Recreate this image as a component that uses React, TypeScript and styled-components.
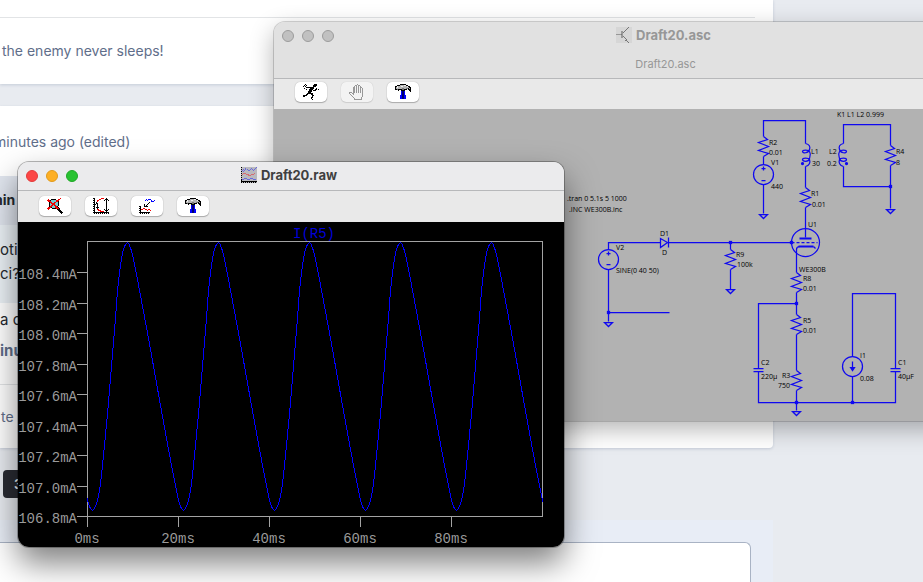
import React from "react";
import styled, { createGlobalStyle } from "styled-components";

const GlobalStyle = createGlobalStyle`
  * { box-sizing: border-box; }
  body {
    margin: 0;
    background: #e8ebf0;
    font-family: Inter, "Liberation Sans", sans-serif;
    overflow: hidden;
  }
`;

/* ---------- forum page ---------- */

const Desktop = styled.div`
  position: relative;
  display: flex;
  flex-direction: column;
  height: 100vh;
  overflow: hidden;
`;

const Thread = styled.main`
  display: flex;
  flex: 1;
  flex-direction: column;
  margin-right: 150px;
  font-size: 14px;
  line-height: 24px;
  color: #24292f;
`;

const Post = styled.article<{ $last?: boolean }>`
  background: #fff;
  border-radius: ${(p) => (p.$last ? "0 0 4px 0" : "0")};
  box-shadow: 0 1px 3px rgba(60, 80, 120, 0.2);
  margin-bottom: 22px;
  padding-top: ${(p) => (p.$last ? "0" : "17px")};
  overflow: hidden;
`;

const PostRule = styled.hr`
  border: 0;
  border-top: 1px solid #e2e4e6;
  margin: 0 18px 0 0;
`;

const Signature = styled.p`
  margin: 0;
  padding: 21px 2px;
  color: #5f6e8a;
`;

const PostMeta = styled.header`
  padding: 24px 0 22px;
  margin-left: -6px;
  color: #5f6e8a;
`;

const QuoteHead = styled.div`
  padding: 12px 0 13px;
  margin-left: -10px;
  background: #e0e5ee;
  font-weight: 700;
`;

const QuoteBody = styled.blockquote`
  margin: 0;
  padding: 13px 0 17px;
  background: #ebf1f6;
  font-size: 15px;
`;

const Reply = styled.div`
  padding: 5px 0 21px;
  font-size: 15px;
`;

const Edited = styled.div`
  margin-top: 7px;
  color: #5f6e8a;
  font-weight: 700;
`;

const PostFooter = styled.footer`
  padding: 20px 1px 19px;
  color: #5f6e8a;
`;

const Pager = styled.nav`
  padding: 0 3px 22px;
`;

const PageButton = styled.button`
  display: block;
  width: 36px;
  height: 28px;
  padding: 0 11px;
  border: 0;
  border-radius: 4px;
  background: #2a2c33;
  color: #fff;
  font: 600 13px Inter, sans-serif;
  text-align: left;
`;

const ReplyForm = styled.form`
  display: flex;
  flex: 1;
  padding: 22px 22px 0 0;
  background: #e8edf6;
`;

const ReplyBox = styled.textarea`
  flex: 1;
  border: 1px solid #a9b3c4;
  border-width: 1px 1px 0 0;
  border-radius: 0 6px 0 0;
  background: #fff;
  resize: none;
`;

/* ---------- application windows ---------- */

const AppWindow = styled.section<{ $active?: boolean }>`
  position: absolute;
  top: ${(p) => (p.$active ? "162px" : "22px")};
  left: ${(p) => (p.$active ? "18px" : "274px")};
  right: ${(p) => (p.$active ? "359px" : "-134px")};
  border-radius: ${(p) => (p.$active ? "11px" : "11px 11px 0 0")};
  overflow: hidden;
  background: #e9e9e9;
  box-shadow: ${(p) =>
    p.$active
      ? "0 0 0 1px rgba(0,0,0,.28), 0 16px 32px rgba(0,0,0,.5)"
      : "0 0 0 1px rgba(0,0,0,.16), 0 8px 24px rgba(0,0,0,.3)"};
`;

const TitleBar = styled.header<{ $active?: boolean }>`
  display: grid;
  grid-template-columns: 60px 1fr 64px;
  align-items: center;
  padding: 0 8px;
  height: 28px;
  background: ${(p) => (p.$active ? "#ebebed" : "#e1e1e1")};
  color: ${(p) => (p.$active ? "#3f3f3f" : "#979797")};
`;

const Lights = styled.div`
  display: flex;
  gap: 8px;
`;

const Light = styled.button<{ $fill: string; $edge: string }>`
  width: 12px;
  height: 12px;
  padding: 0;
  border: 1px solid ${(p) => p.$edge};
  border-radius: 50%;
  background: ${(p) => p.$fill};
`;

const WindowTitle = styled.h1`
  display: flex;
  align-items: center;
  justify-content: center;
  gap: 4px;
  margin: 0;
  padding-bottom: 2px;
  font-size: 13px;
  line-height: 16px;
  font-weight: 700;
`;

const DocumentTab = styled.div`
  height: 28px;
  background: #e1e1e1;
  color: #979797;
  font-size: 11px;
  line-height: 28px;
  text-align: center;
`;

const Toolbar = styled.div<{ $active?: boolean }>`
  display: flex;
  gap: 14px;
  padding: ${(p) => (p.$active ? "5px 21px 6px" : "3px 21px 7px")};
  border-top: 1px solid #b7b8ba;
  background: #e9e9e9;
`;

const ToolButton = styled.button`
  display: flex;
  align-items: center;
  justify-content: center;
  width: 32px;
  height: 20px;
  padding: 0;
  border: 0;
  border-radius: 5px;
  background: #fff;
  box-shadow: 0 0 1px rgba(0, 0, 0, 0.3), 0 1px 1px rgba(0, 0, 0, 0.25);
  &:disabled {
    background: #f3f3f3;
    box-shadow: 0 0 1px rgba(0, 0, 0, 0.2), 0 1px 1px rgba(0, 0, 0, 0.1);
  }
`;

const Drawing = styled.svg<{ $back: string }>`
  display: block;
  width: 100%;
  height: auto;
  background: ${(p) => p.$back};
`;

const SchematicText = styled.text`
  font: 500 7px "Open Sans", sans-serif;
  fill: #000;
`;

const PlotText = styled.text<{ $trace?: boolean }>`
  font: 14px "Liberation Mono", monospace;
  fill: ${(p) => (p.$trace ? "#0000d8" : "#9a9a9a")};
`;

/* ---------- pixel icons ---------- */

const PALETTE: Record<string, string> = {
  k: "#000000",
  g: "#b4b4b4",
  d: "#777777",
  w: "#eeeeee",
  b: "#0000ff",
  n: "#00006a",
  r: "#f00000",
  c: "#74c8d0",
  s: "#989898",
  o: "#b9b9be",
  v: "#6a6adc",
  p: "#d66a70",
  l: "#d6d6d6",
};

const HAMMER = [
  ".....kkkkkk.....",
  "..kkkggggwwkk...",
  "kkwgggwwggggwkk.",
  "kgwgggggggggggkk",
  "kggggggddggddkgk",
  "kkdkkkkddkkk.kkk",
  "...k..kkkk....kk",
  "......bnnb.....k",
  "......bnnb......",
  "......bnnb......",
  "......bnnb......",
  ".....bbnnbb.....",
  ".....bbnnbb.....",
  ".....bbnnbb.....",
  ".....bbnnbb.....",
  "................",
];

const ZOOM_OFF = [
  ".............r..",
  ".r..kkkkk..rr...",
  "rrrkcccccrrr....",
  ".rrrcccccrrk....",
  "..krrccrrcck....",
  "..kcrrrrccck....",
  "..kccrrrccck....",
  "..kcrrcrrcck....",
  "..krrcccrrk.....",
  ".rrrkcccrrrk....",
  "rrr..kkkkrrrk...",
  ".r........kkk...",
  "...........kkk..",
  "............kkk.",
  ".............kkk",
  "..............k.",
];

const AUTORANGE = [
  "kk......rrr..k..",
  ".k....rr....kkk.",
  "kk..rr.....k.k.k",
  ".k..r........k..",
  "kk.k.........k..",
  ".k.kk........k..",
  "kkk.k........k..",
  ".k..k........k..",
  "kk..k........k..",
  ".k.kkk.......k..",
  "kk..k........k..",
  ".k..rr.....k.k.k",
  "kk...rrr....kkk.",
  ".k.....rrrr..k..",
  "kkkkkkkkkkkkkkkk",
  ".k.k.k.k.k.k.k.k",
];

const ADD_TRACE = [
  "................",
  ".......b.bbb....",
  "......b.b...b..b",
  "............bbb.",
  "..........k.....",
  ".........k......",
  ".....k..k.......",
  ".....k.k........",
  "kk...kkkk.......",
  ".k..............",
  "kk..rr..........",
  ".krr..rr.rr.....",
  "kk......r..r....",
  ".k..............",
  "kkkkkkkkkkk.....",
  ".k.k.k.k.k......",
];

const RUNNER = [
  "..k........kkk..",
  ".k.k......kkkk..",
  "k.k.......kkk...",
  "...kkkkkkkk.....",
  ".k.....kkkk..k..",
  "...k..kkkk..kk.k",
  "......kkk.kkk...",
  ".....kkkk.......",
  ".....kkk........",
  "....kkkkkk......",
  "...kk...kk......",
  "kkkk.....kk.....",
  "kk.......k......",
  "........kk......",
  "........k.......",
  ".........k......",
];

const HAND = [
  "........s.......",
  "......ss.ss.....",
  ".....s.s.s.s....",
  "....ss.s.s.ss...",
  "....ss.s.s.s.s..",
  "....ss.s.s.s.s..",
  "....ss.s.s.s.s..",
  "....ss.s.s.s.s..",
  "sss.ss.s.s.s.s..",
  "s..ss........s..",
  ".s..s........s..",
  "..s..........s..",
  "...s.........s..",
  "....s.......s...",
  ".....s......s...",
  ".....ssssssss...",
];

const PLOT_DOC = [
  "koooooooooooooov",
  "oooovooooovooovo",
  "kovovovoovovovoo",
  "ovovooovvooovooo",
  "kovooooooooooooo",
  "oooooooooooooooo",
  "kopppoooooooopoo",
  "opooopppoopppooo",
  "koooooopppoooooo",
  "oooooooooooooooo",
  "kooooooooooooooo",
  "ooovvvooovvvoooo",
  "kvvooovvvooovvvo",
  "kooooooooooooooo",
  "kkkkkkkkkkkkkkkk",
  "kokokokokokokoko",
];

const SCHEMATIC_DOC = [
  "lllllllllllldlll",
  "llllllllllldllll",
  "lllllllllldlllll",
  "llllllllldllllll",
  "lllllssldlllllll",
  "lllllssdllllllll",
  "lllllsslllllllll",
  "sssssdslllllllll",
  "lllllsslllllllll",
  "lllllssdllllllll",
  "lllllssldlllllll",
  "llllllllldllllll",
  "lllllllllldlllll",
  "lllllllllddlllll",
  "llllllllllldllll",
  "lllllllllllldlll",
];

function PixelIcon({ rows }: { rows: string[] }) {
  return (
    <svg width="16" height="16" viewBox="0 0 16 16" shapeRendering="crispEdges" aria-hidden="true">
      {rows.map((row, y) =>
        [...row].map((cell, x) =>
          cell === "." ? null : (
            <rect key={`${x}-${y}`} x={x} y={y} width="1" height="1" fill={PALETTE[cell]} />
          )
        )
      )}
    </svg>
  );
}

/* ---------- schematic ---------- */

const WIRE = "#0f08f0";

const Resistor = ({ x, y }: { x: number; y: number }) => (
  <path d={`M${x} ${y}l4 3l-9 3l10 4l-10 4l10 3l-5 3`} />
);

const Ground = ({ x, y }: { x: number; y: number }) => (
  <path d={`M${x - 4} ${y}h8l-4 4z`} />
);

const Junction = ({ x, y }: { x: number; y: number }) => (
  <rect x={x - 1} y={y - 1} width="2" height="2" fill={WIRE} />
);

const Capacitor = ({ x, y }: { x: number; y: number }) => (
  <path d={`M${x - 5} ${y}h10M${x - 5} ${y + 3}h10`} />
);

const Coil = ({ x, y, flip }: { x: number; y: number; flip?: boolean }) => (
  <g transform={`translate(${x} ${y}) scale(${flip ? -1 : 1} 1)`}>
    <path d="M0 0C4 1 5 3 4 6C3 10-3 10-3 8C-3 6 3 6 4 8C6 11 4 14 4 15C3 19-3 18-3 16C-3 14 3 14 4 16C5 19 4 22 0 23" />
    <circle cx="-3" cy="20" r="1" fill={WIRE} />
  </g>
);

const LABELS: [number, number, string][] = [
  [837, 117, "K1 L1 L2 0.999"],
  [769, 145, "R2"],
  [769, 155, "0.01"],
  [771, 165, "V1"],
  [771, 189, "440"],
  [811, 154, "L1"],
  [812, 166, "30"],
  [829, 154, "L2"],
  [827, 166, "0.2"],
  [896, 154, "R4"],
  [896, 165, "8"],
  [811, 196, "R1"],
  [812, 207, "0.01"],
  [808, 227, "U1"],
  [567, 201, ".tran 0 5.1s 5 1000"],
  [569, 212, ".INC WE300B.inc"],
  [660, 236, "D1"],
  [662, 255, "D"],
  [616, 250, "V2"],
  [616, 273, "SINE(0 40 50)"],
  [736, 257, "R9"],
  [737, 267, "100k"],
  [799, 272, "WE300B"],
  [803, 281, "R8"],
  [803, 291, "0.01"],
  [803, 323, "R5"],
  [803, 333, "0.01"],
  [761, 365, "C2"],
  [761, 379, "220µ"],
  [782, 378, "R3"],
  [778, 388, "750"],
  [860, 358, "I1"],
  [860, 381, "0.08"],
  [898, 365, "C1"],
  [898, 379, "40µF"],
];

function Schematic() {
  return (
    <Drawing $back="#b2b2b2" viewBox="274 109 783 312" role="img" aria-label="Amplifier schematic">
      <g fill="none" stroke={WIRE} strokeWidth="1.25" transform="translate(-0.5 -0.5)">
        <path d="M764 137V121H806V144M806 167V188M806 208V238" />
        <path d="M764 157V165M764 185V214" />
        <path d="M844 144V125H891V146M891 166V209M844 167V187H891" />
        <path d="M609 250V243H661M669 243H792M609 270V322M609 313H670" />
        <path d="M731 243V250M731 270V290" />
        <path d="M797 273V250Q797 247 800 247M797 293V315M797 335V371M797 391V411" />
        <path d="M797 304H759V369M759 372V403H896V372M896 369V294H853V357M853 377V403" />
        <path d="M661 239V248L668 243ZM669 238V248" />
        <path d="M800 239H812M799 247H814" strokeWidth="2" />
        <path d="M792 243H818" strokeDasharray="3 2" />
        <path d="M814 247L816 249" />
        <circle cx="806" cy="243" r="14" />
        <circle cx="764" cy="175" r="10" />
        <circle cx="609" cy="260" r="10" />
        <circle cx="853" cy="367" r="10" />
        <path d="M762 169H766M764 167V171M762 181H766M607 254H611M609 252V256M607 265H611" />
        <path d="M853 362V370M851 368L853 371L855 368Z" />
        <Resistor x={764} y={137} />
        <Resistor x={806} y={188} />
        <Resistor x={891} y={146} />
        <Resistor x={731} y={250} />
        <Resistor x={797} y={273} />
        <Resistor x={797} y={315} />
        <Resistor x={797} y={371} />
        <Ground x={764} y={215} />
        <Ground x={891} y={210} />
        <Ground x={609} y={323} />
        <Ground x={731} y={290} />
        <Ground x={797} y={412} />
        <Capacitor x={759} y={369} />
        <Capacitor x={896} y={369} />
        <Coil x={806} y={144} />
        <Coil x={844} y={144} flip />
        <Junction x={792} y={243} />
        <Junction x={731} y={243} />
        <Junction x={609} y={313} />
        <Junction x={797} y={304} />
        <Junction x={797} y={403} />
        <Junction x={853} y={403} />
        <Junction x={891} y={187} />
      </g>
      {LABELS.map(([x, y, text]) => (
        <SchematicText key={`${x}-${y}`} x={x} y={y}>
          {text}
        </SchematicText>
      ))}
    </Drawing>
  );
}

/* ---------- waveform ---------- */

/* One 20 ms period of the resistor current: [offset, y] */
const PERIOD: [number, number][] = [
  [0, 510], [4, 505], [8, 487], [12, 450], [16, 408], [19, 372], [23, 324],
  [26, 286], [29, 262], [32, 248], [36, 243], [40, 253], [45, 277], [51, 309],
  [57, 341], [67, 397], [77, 452], [83, 483], [87, 502],
];

function tracePath() {
  const pts: [number, number][] = [];
  for (let n = -1; n < 6; n++) {
    PERIOD.forEach(([dx, y]) => pts.push([92 + n * 91 + dx, y]));
  }
  let d = `M${pts[1][0]} ${pts[1][1]}`;
  for (let i = 1; i < pts.length - 2; i++) {
    const [a, b, c, e] = [pts[i - 1], pts[i], pts[i + 1], pts[i + 2]];
    d += `C${b[0] + (c[0] - a[0]) / 6} ${b[1] + (c[1] - a[1]) / 6} ${c[0] - (e[0] - b[0]) / 6} ${
      c[1] - (e[1] - b[1]) / 6
    } ${c[0]} ${c[1]}`;
  }
  return d;
}

const Y_TICKS: [number, string][] = [
  [272, "108.4mA"],
  [303, "108.2mA"],
  [333, "108.0mA"],
  [364, "107.8mA"],
  [394, "107.6mA"],
  [425, "107.4mA"],
  [455, "107.2mA"],
  [486, "107.0mA"],
  [516, "106.8mA"],
];

const X_TICKS: [number, string][] = [
  [87, "0ms"],
  [178, "20ms"],
  [269, "40ms"],
  [360, "60ms"],
  [451, "80ms"],
];

function Plot() {
  return (
    <Drawing $back="#000" viewBox="18 222 546 325" role="img" aria-label="Current through R5">
      <defs>
        <clipPath id="plot-area">
          <rect x="87" y="241" width="456" height="276" />
        </clipPath>
      </defs>
      <g fill="none" stroke="#a3a3a3" strokeWidth="1" shapeRendering="crispEdges">
        <rect x="87.5" y="241.5" width="455" height="275" />
        {Y_TICKS.map(([y]) => (
          <path key={y} d={`M77 ${y + 0.5}H87`} />
        ))}
        {X_TICKS.map(([x]) => (
          <path key={x} d={`M${x + 0.5} 517V527`} />
        ))}
      </g>
      <path
        d={tracePath()}
        fill="none"
        stroke="#0000ff"
        strokeWidth="1"
        shapeRendering="crispEdges"
        clipPath="url(#plot-area)"
      />
      {Y_TICKS.map(([y, label]) => (
        <PlotText key={label} x={77} y={y + 7} textAnchor="end">
          {label}
        </PlotText>
      ))}
      {X_TICKS.map(([x, label]) => (
        <PlotText key={label} x={x} y={543} textAnchor="middle">
          {label}
        </PlotText>
      ))}
      <PlotText $trace x={314} y={238} textAnchor="middle">
        I(R5)
      </PlotText>
    </Drawing>
  );
}

/* ---------- page ---------- */

const GREY: [string, string] = ["#c1c1c1", "#9c9c9c"];

function WindowLights({ colours }: { colours: [string, string][] }) {
  return (
    <Lights>
      {["Close", "Minimise", "Zoom"].map((name, i) => (
        <Light key={name} type="button" aria-label={name} $fill={colours[i][0]} $edge={colours[i][1]} />
      ))}
    </Lights>
  );
}

export default function App() {
  return (
    <>
      <GlobalStyle />
      <Desktop>
        <Thread>
          <Post>
            <PostRule />
            <Signature>the enemy never sleeps!</Signature>
          </Post>
          <Post $last>
            <PostMeta>minutes ago (edited)</PostMeta>
            <QuoteHead>min</QuoteHead>
            <QuoteBody>
              oti
              <br />
              ci?
            </QuoteBody>
            <Reply>
              a c<Edited>inu</Edited>
            </Reply>
            <PostRule />
            <PostFooter>te</PostFooter>
          </Post>
          <Pager aria-label="Pages">
            <PageButton type="button">3</PageButton>
          </Pager>
          <ReplyForm>
            <ReplyBox aria-label="Reply" />
          </ReplyForm>
        </Thread>

        <AppWindow aria-label="Draft20.asc">
          <TitleBar>
            <WindowLights colours={[GREY, GREY, GREY]} />
            <WindowTitle>
              <PixelIcon rows={SCHEMATIC_DOC} />
              Draft20.asc
            </WindowTitle>
          </TitleBar>
          <DocumentTab>Draft20.asc</DocumentTab>
          <Toolbar>
            <ToolButton type="button" aria-label="Run">
              <PixelIcon rows={RUNNER} />
            </ToolButton>
            <ToolButton type="button" aria-label="Halt" disabled>
              <PixelIcon rows={HAND} />
            </ToolButton>
            <ToolButton type="button" aria-label="Control panel">
              <PixelIcon rows={HAMMER} />
            </ToolButton>
          </Toolbar>
          <Schematic />
        </AppWindow>

        <AppWindow $active aria-label="Draft20.raw">
          <TitleBar $active>
            <WindowLights
              colours={[
                ["#fc4645", "#e23b3b"],
                ["#fdaf24", "#e09a1c"],
                ["#28c231", "#1fa727"],
              ]}
            />
            <WindowTitle>
              <PixelIcon rows={PLOT_DOC} />
              Draft20.raw
            </WindowTitle>
          </TitleBar>
          <Toolbar $active>
            <ToolButton type="button" aria-label="Zoom to fit">
              <PixelIcon rows={ZOOM_OFF} />
            </ToolButton>
            <ToolButton type="button" aria-label="Autorange">
              <PixelIcon rows={AUTORANGE} />
            </ToolButton>
            <ToolButton type="button" aria-label="Add trace">
              <PixelIcon rows={ADD_TRACE} />
            </ToolButton>
            <ToolButton type="button" aria-label="Control panel">
              <PixelIcon rows={HAMMER} />
            </ToolButton>
          </Toolbar>
          <Plot />
        </AppWindow>
      </Desktop>
    </>
  );
}
